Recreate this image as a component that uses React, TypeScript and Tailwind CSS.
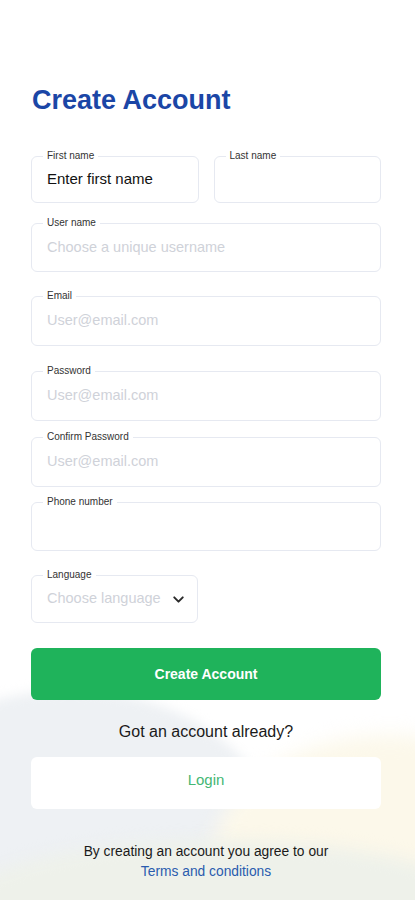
import { ChevronDown } from "lucide-react";

type FieldProps = {
  label: string;
  placeholder?: string;
  value?: string;
  className?: string;
  select?: boolean;
};

function Field({ label, placeholder, value, className = "", select }: FieldProps) {
  return (
    <div className={`relative rounded-md border border-[#e6e9f1] bg-white flex items-center pl-[15px] ${select ? "pr-[10px]" : "pr-4"} ${className}`}>
      <span className="absolute -top-[7px] left-[11px] bg-white px-1 text-[10px] leading-[12px] text-[#333]">
        {label}
      </span>
      {value ? (
        <span className="text-[15px] text-[#111]">{value}</span>
      ) : (
        <span className="whitespace-nowrap text-[14.5px] text-[#cfd2d9]">{placeholder}</span>
      )}
      {select && <ChevronDown size={17} strokeWidth={2.75} className="ml-auto shrink-0 text-[#2a2a2a]" />}
    </div>
  );
}

export default function App() {
  return (
    <div className="relative min-h-[900px] w-full overflow-hidden bg-white font-['Liberation_Sans']">
      {/* soft background shapes */}
      <div className="absolute left-[-140px] top-[690px] h-[320px] w-[420px] rounded-[50%] bg-[#eef1f4] blur-[6px]" />
      <div className="absolute left-[210px] top-[735px] h-[260px] w-[360px] rounded-[50%] bg-[#fcf8ea] blur-[10px]" />
      <div className="absolute left-[-60px] top-[840px] h-[160px] w-[560px] rounded-[50%] bg-[#eef1ea] blur-[8px]" />

      <div className="relative pl-[31px] pr-[34px] pt-[84px] pb-8">
        <h1 className="pl-[1px] text-[27px] font-bold leading-[32px] text-[#1b46a6]">Create Account</h1>

        <div className="mt-[40px] flex gap-[15px]">
          <Field label="First name" value="Enter first name" className="h-[47px] flex-1" />
          <Field label="Last name" className="h-[47px] flex-1" />
        </div>
        <Field label="User name" placeholder="Choose a unique username" className="mt-[20px] h-[49px]" />
        <Field label="Email" placeholder="User@email.com" className="mt-[24px] h-[50px]" />
        <Field label="Password" placeholder="User@email.com" className="mt-[25px] h-[50px]" />
        <Field label="Confirm Password" placeholder="User@email.com" className="mt-[16px] h-[50px]" />
        <Field label="Phone number" className="mt-[15px] h-[49px]" />
        <Field label="Language" placeholder="Choose language" select className="mt-[24px] h-[48px] w-[167px]" />

        <button className="mt-[25px] flex h-[52px] w-full items-center justify-center rounded-md bg-[#1fb35b] text-[14px] font-bold text-white">
          Create Account
        </button>

        <p className="mt-[20px] text-center text-[16px] text-[#1a1a1a]">Got an account already?</p>

        <button className="mt-[13px] flex h-[52px] w-full items-center justify-center rounded-md bg-white pb-[6px] text-[15px] text-[#45b774]">
          Login
        </button>

        <div className="mt-[33px] text-center text-[13.8px] leading-[20px]">
          <p className="text-[#1a1a1a]">By creating an account you agree to our</p>
          <p className="text-[#2a5cae]">Terms and conditions</p>
        </div>
      </div>
    </div>
  );
}
